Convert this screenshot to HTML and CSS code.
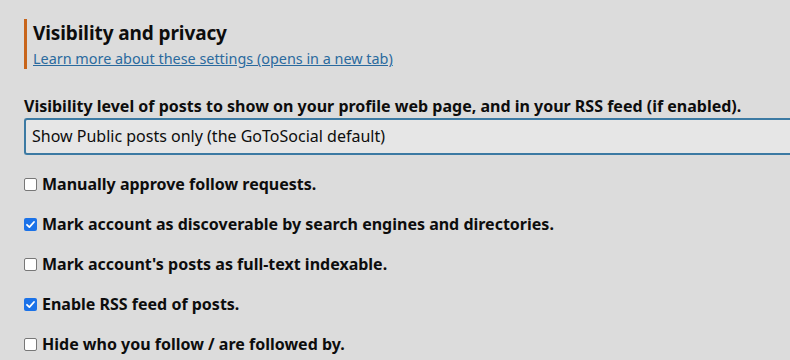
FILE: index.html
```html
<!DOCTYPE html>
<html>
    <head>
        <title>Visibility and privacy</title>
        <link rel="stylesheet" href="styles.css">
    </head>
    <body>
        <div class="settings">
            <div class="form-section-docs">
                <h3 class="section-title">Visibility and privacy</h3>
                <a class="docs-link" href="#">Learn more about these settings (opens in a new tab)</a>
            </div>

            <div class="field">
                <label class="field-label" for="visibility">Visibility level of posts to show on your profile web page, and in your RSS feed (if enabled).</label>
                <div class="select-box" id="visibility">Show Public posts only (the GoToSocial default)</div>
            </div>

            <label class="checkbox-row"><span class="box"></span>Manually approve follow requests.</label>
            <label class="checkbox-row"><span class="box checked"><svg viewBox="0 0 13 13" width="13" height="13"><path d="M3 6.8 L5.4 9.1 L10 4" fill="none" stroke="white" stroke-width="1.8" stroke-linecap="round" stroke-linejoin="round"/></svg></span>Mark account as discoverable by search engines and directories.</label>
            <label class="checkbox-row"><span class="box"></span>Mark account's posts as full-text indexable.</label>
            <label class="checkbox-row"><span class="box checked"><svg viewBox="0 0 13 13" width="13" height="13"><path d="M3 6.8 L5.4 9.1 L10 4" fill="none" stroke="white" stroke-width="1.8" stroke-linecap="round" stroke-linejoin="round"/></svg></span>Enable RSS feed of posts.</label>
            <label class="checkbox-row"><span class="box"></span>Hide who you follow / are followed by.</label>
        </div>
    </body>
</html>
```

FILE: styles.css
```css
body{
    margin:0;
    background-color:#dcdcdc;
    color:#0d0d0d;
    font-family:"Noto Sans", sans-serif;
    overflow:hidden;
}

.settings{
    padding:19px 0 0 24px;
}

.form-section-docs{
    border-left:3px solid #c8651b;
    padding-left:6px;
    height:50px;
}

.section-title{
    margin:0;
    font-size:19px;
    font-weight:bold;
    letter-spacing:-0.1px;
    line-height:28px;
}

.docs-link{
    font-size:14.4px;
    color:#2a6a9e;
    line-height:20px;
}

.field{
    margin-top:26px;
}

.field-label{
    display:block;
    font-size:16px;
    font-weight:bold;
    line-height:22px;
}

.select-box{
    margin-top:1px;
    height:33px;
    border:2px solid #3c7aa3;
    border-right:none;
    border-radius:3px 0 0 3px;
    background-color:#e6e6e6;
    font-size:16px;
    line-height:33px;
    padding-left:6px;
}

.checkbox-row{
    display:flex;
    align-items:center;
    gap:5px;
    font-size:16px;
    font-weight:bold;
    height:22px;
    margin-top:18px;
}

.box{
    width:11px;
    height:11px;
    border:1px solid #777;
    border-radius:2px;
    background-color:white;
    display:flex;
}

.box.checked{
    width:13px;
    height:13px;
    border:none;
    background-color:#1b72e8;
}
```
